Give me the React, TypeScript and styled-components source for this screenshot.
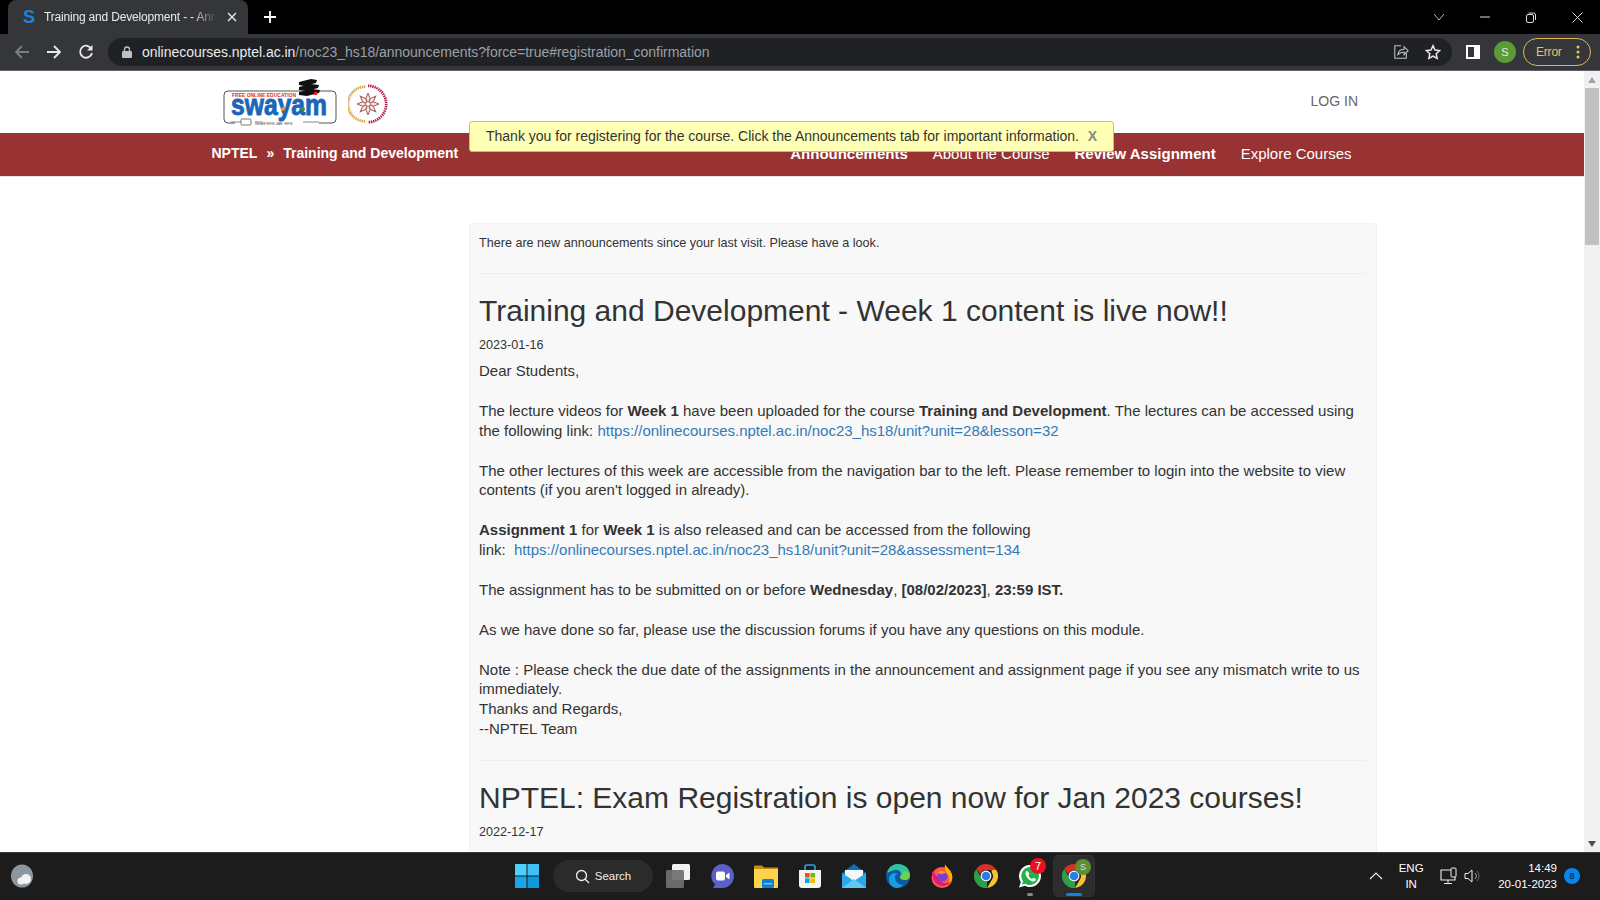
import React from "react";
import styled, { createGlobalStyle } from "styled-components";

const Global = createGlobalStyle`
  html, body { margin: 0; padding: 0; height: 900px; overflow: hidden; background: #fff; }
  * { box-sizing: border-box; }
  body { font-family: "Liberation Sans", Arial, sans-serif; }
`;
const Screen = styled.div`display:flex;flex-direction:column;width:1600px;height:900px;overflow:hidden;`;

/* ---- browser chrome ---- */
const TabStrip = styled.div`height:34px;background:#000;display:flex;align-items:flex-end;padding-left:8px;flex:none;`;
const Tab = styled.div`width:240px;height:34px;background:#35363a;border-radius:8px 8px 0 0;display:flex;align-items:center;padding:0 11px 0 14px;color:#e8eaed;font:12px "Liberation Sans",sans-serif;`;
const TabTitle = styled.span`flex:1;margin:0 10px 0 8px;white-space:nowrap;overflow:hidden;letter-spacing:-.18px;
  -webkit-mask-image:linear-gradient(90deg,#000 86%,transparent);mask-image:linear-gradient(90deg,#000 86%,transparent);`;
const NewTab = styled.div`margin-left:15px;height:34px;display:flex;align-items:center;`;
const WindowControls = styled.div`margin-left:auto;height:34px;display:flex;align-items:center;`;
const WinBtn = styled.div`width:46px;height:28px;display:flex;align-items:center;justify-content:center;`;

const Toolbar = styled.div`height:37px;background:#35363a;border-bottom:1px solid #5f6368;display:flex;align-items:center;padding-bottom:1px;flex:none;`;
const NavIcon = styled.div`width:32px;height:28px;display:flex;align-items:center;justify-content:center;`;
const NavIcons = styled.div`display:flex;padding-left:6px;`;
const Omnibox = styled.div`margin-left:6px;width:1344px;height:28px;border-radius:14px;background:#202124;display:flex;align-items:center;padding:0 12px 0 14px;`;
const UrlHost = styled.span`color:#e8eaed;font-size:14px;margin-left:10px;letter-spacing:-.03px;`;
const UrlRest = styled.span`color:#9aa0a6;font-size:14px;letter-spacing:-.03px;`;
const OmniEnd = styled.div`margin-left:auto;margin-right:-1px;display:flex;gap:16px;align-items:center;`;
const SidePanel = styled(NavIcon)`margin-left:5px;`;
const Avatar = styled.div`width:22px;height:22px;border-radius:50%;background:#5c9a35;color:#e8eaed;font-size:11px;display:flex;align-items:center;justify-content:center;margin-left:5px;`;
const ErrorPill = styled.div`margin-left:7px;width:68px;height:28px;border:1px solid #e2b45a;border-radius:14px;display:flex;align-items:center;justify-content:space-between;padding:0 10px 0 12px;color:#f0c060;font-size:12px;letter-spacing:-.2px;`;

/* ---- page ---- */
const Viewport = styled.div`flex:1;min-height:0;display:flex;position:relative;`;
const PageScroll = styled.div`flex:1;min-width:0;overflow:hidden;background:#fff;`;
const SiteHeader = styled.div`height:62px;display:flex;align-items:center;padding-left:223px;padding-right:226px;`;
const EmblemSlot = styled.div`margin:4px 0 0 11px;display:flex;`;
const LogIn = styled.a`margin-left:auto;color:#666;font-size:14px;margin-top:-2px;`;
const SiteNav = styled.div`height:44px;background:#993333;border-bottom:1px solid #e4e4e4;display:flex;align-items:center;color:#fff;padding:0 0 2px 211.500px;`;
const Crumb = styled.span`font-size:14px;font-weight:bold;margin-top:-1px;`;
const CrumbSep = styled(Crumb)`margin:-1px 9px 0;`;
const NavLinks = styled.div`display:flex;gap:25px;margin-left:332px;`;
const NavLink = styled.a<{ $bold?: boolean }>`font-size:15px;font-weight:${p => (p.$bold ? "bold" : "normal")};`;
const Alert = styled.div`position:absolute;left:469px;top:50px;width:645px;height:31px;background:#ffffb5;border:1px solid #c8c850;border-radius:3px;display:flex;align-items:center;padding:0 16px 2px;color:#333;font-size:14px;`;
const AlertClose = styled.span`margin-left:auto;font-weight:bold;color:#888;font-size:14px;`;

const Content = styled.div`margin:46px 0 0 469px;width:908px;background:#f8f8f8;border:1px solid #f1f1f1;border-radius:4px;padding:9px 10px 9px 9px;`;
const Notice = styled.div`font-size:12.6px;line-height:20px;color:#333;height:40px;`;
const Rule = styled.hr`border:0;border-top:1px solid #eee;margin:0;`;
const Title = styled.h2`margin:20px 0 10px;font-size:30px;font-weight:500;line-height:33px;color:#333;`;
const DateLine = styled.div`font-size:12.6px;line-height:17px;color:#333;margin-bottom:7px;`;
const Body = styled.div`font-size:15px;line-height:19.9px;color:#333;`;
const Para = styled.p`margin:0 0 19.9px;`;
const Link = styled.a`color:#337ab7;`;
const Second = styled.div`margin-top:21px;`;

const Scrollbar = styled.div`width:16px;background:#f1f1f1;display:flex;flex-direction:column;align-items:center;flex:none;`;
const ScrollArrow = styled.div`height:17px;display:flex;align-items:center;justify-content:center;flex:none;`;
const ScrollThumb = styled.div`width:14px;height:157px;background:#c1c1c1;`;
const ScrollGap = styled.div`flex:1;`;

/* ---- taskbar ---- */
const Taskbar = styled.div`height:48px;background:#1c1c1c;border-top:1px solid #3a3a3a;display:flex;align-items:center;flex:none;color:#fff;padding-bottom:1px;`;
const LeftSlot = styled.div`width:505px;padding-left:11px;display:flex;align-items:center;`;
const TaskIcon = styled.div<{ $active?: boolean }>`width:44px;height:40px;display:flex;align-items:center;justify-content:center;position:relative;border-radius:4px;
  ${p => p.$active ? "background:#2d2d2d;outline:1px solid #333;width:40px;margin:0 2px;" : ""}`;
const SearchPill = styled.div`width:100px;height:32px;border-radius:16px;background:#2b2b2b;margin:0 3px 0 4px;display:flex;align-items:center;justify-content:center;gap:5px;font-size:11.5px;color:#eee;`;
const Badge = styled.div`position:absolute;right:6px;top:2px;width:16px;height:16px;border-radius:50%;background:#e81123;color:#fff;font-size:11px;display:flex;align-items:center;justify-content:center;`;
const SBadge = styled.div`position:absolute;right:3px;top:3px;width:16px;height:16px;border-radius:50%;background:#5f8f35;color:#ddd;font-size:9px;display:flex;align-items:center;justify-content:center;`;
const RunDot = styled.div<{ $w: number; $c: string }>`position:absolute;bottom:0;left:50%;transform:translateX(-50%);width:${p => p.$w}px;height:3px;border-radius:2px;background:${p => p.$c};`;
const Tray = styled.div`margin-left:auto;display:flex;align-items:center;padding-right:20px;`;
const Lang = styled.div`font-size:11.5px;line-height:16px;text-align:center;width:32px;margin-left:12px;`;
const ClockBox = styled.div`font-size:11.5px;line-height:16px;text-align:right;margin-left:16px;`;
const TrayIcons = styled.div`display:flex;align-items:center;gap:6px;margin-left:13px;`;
const Notif = styled.div`width:16px;height:16px;border-radius:50%;background:#0a84ea;color:#111;font-size:9px;display:flex;align-items:center;justify-content:center;margin-left:7px;`;

const Favicon = () => (
  <svg width="14" height="18" viewBox="0 0 14 18"><text x="7" y="15" textAnchor="middle" fontFamily="Liberation Sans" fontWeight="bold" fontSize="18" fill="#1b84d8">S</text></svg>
);
const SwayamLogo = () => (
  <svg width="114" height="47" viewBox="0 0 114 47">
    <rect x="1" y="12" width="112" height="32" rx="4" fill="#fff" stroke="#555" strokeWidth="1" />
    <rect x="12" y="40" width="84" height="6" fill="#fff" />
    <text x="9" y="17.500" fontFamily="Liberation Sans" fontWeight="bold" fontSize="5" textLength="64" lengthAdjust="spacing" fill="#e0312a">FREE ONLINE EDUCATION</text>
    <text x="8" y="36" fontFamily="Liberation Sans" fontWeight="bold" fontSize="29" fill="#1a66b8" stroke="#1a66b8" strokeWidth=".9" textLength="96" lengthAdjust="spacingAndGlyphs">swayam</text>
    <circle cx="60" cy="30" r="2" fill="#f39c12" /><circle cx="80" cy="30" r="2" fill="#2ca02c" />
    <rect x="18" y="40" width="10" height="6" rx="1" fill="#fff" stroke="#444" strokeWidth=".7" />
    <line x1="8" y1="43" x2="18" y2="43" stroke="#555" strokeWidth=".7" />
    <text x="32" y="45.500" fontFamily="Liberation Sans" fontSize="4.2" fill="#333">शिक्षित भारत, उन्नत भारत</text>
    <line x1="80" y1="43" x2="96" y2="43" stroke="#555" strokeWidth=".7" />
    <path d="M76 3l12-3 6 1-1 3-12 3-5-1zM76 8l12-3 8 1-1 3-12 3-7-1zM76 13l13-3 8 1-1 3-12 3-8-1z" fill="#111" />
    <rect x="91" y="13" width="3" height="3" fill="#d22" />
  </svg>
);
const Emblem = () => (
  <svg width="40" height="40" viewBox="0 0 42 44">
    <path d="M18 3A19 19 0 0 0 18 41" fill="none" stroke="#d9a441" strokeWidth="3" strokeDasharray="1.6 .8" />
    <path d="M21 2A20 20 0 0 1 21 42" fill="none" stroke="#b5234a" strokeWidth="3" strokeDasharray="1.6 .8" />
    <g stroke="#a55a55" strokeWidth="1.100" fill="#f7e6e6">
      {[0, 45, 90, 135, 180, 225, 270, 315].map(a => (
        <path key={a} transform={`rotate(${a} 21 22)`} d="M21 22l-2.4-6 2.4-6 2.4 6z" />
      ))}
    </g>
    <circle cx="21" cy="22" r="2.6" fill="#fff" stroke="#a55a55" />
  </svg>
);

const WinLogo = () => (
  <svg width="24" height="24" viewBox="0 0 24 24">
    <rect x="0" y="0" width="11.5" height="11.5" fill="#4fd0f8" /><rect x="12.5" y="0" width="11.5" height="11.5" fill="#3fc0f5" />
    <rect x="0" y="12.5" width="11.5" height="11.5" fill="#17a6ea" /><rect x="12.5" y="12.5" width="11.5" height="11.5" fill="#0f97e0" />
  </svg>
);
const TaskView = () => (
  <svg width="24" height="24" viewBox="0 0 24 24">
    <rect x="6" y="0" width="18" height="16" rx="1.5" fill="#f2f2f2" />
    <rect x="0" y="6" width="18" height="18" rx="1.5" fill="#707070" fillOpacity=".93" />
  </svg>
);
const Meet = () => (
  <svg width="24" height="24" viewBox="0 0 24 24">
    <path d="M12 0a12 12 0 0 1 0 24H3l2-3.5A12 12 0 0 1 12 0z" fill="#5b5fc7" />
    <rect x="6" y="7.5" width="9" height="9" rx="2" fill="#fff" /><path d="M16 11l3.5-2.5v7L16 13z" fill="#fff" />
  </svg>
);
const Folder = () => (
  <svg width="24" height="24" viewBox="0 0 24 24">
    <path d="M0 2.5a1 1 0 0 1 1-1h7l2 2h14v3H0z" fill="#c98d0a" />
    <path d="M0 5h24v18a1 1 0 0 1-1 1H1a1 1 0 0 1-1-1z" fill="#fcd34d" />
    <rect x="8" y="15" width="12" height="9" rx="1.5" fill="#0f7fd0" /><rect x="10" y="19" width="8" height="1.4" fill="#7cc4f0" />
  </svg>
);
const Store = () => (
  <svg width="24" height="24" viewBox="0 0 24 24">
    <path d="M7 6V3a2 2 0 0 1 2-2h6a2 2 0 0 1 2 2v3" fill="none" stroke="#2aa4e8" strokeWidth="1.6" />
    <path d="M1 6h22v15a3 3 0 0 1-3 3H4a3 3 0 0 1-3-3z" fill="#f4f4f4" />
    <rect x="7" y="9" width="4.6" height="4.6" fill="#f25022" /><rect x="12.4" y="9" width="4.6" height="4.6" fill="#7fba00" />
    <rect x="7" y="14.4" width="4.6" height="4.6" fill="#00a4ef" /><rect x="12.4" y="14.4" width="4.6" height="4.6" fill="#ffb900" />
  </svg>
);
const Mail = () => (
  <svg width="24" height="24" viewBox="0 0 24 24">
    <path d="M0 9L12 0l12 9v15H0z" fill="#0f6cbd" />
    <path d="M3 6h18v9l-9 5-9-5z" fill="#f4f8fb" />
    <path d="M0 9l12 8 12-8v15H0z" fill="#29a8ea" />
    <path d="M0 24l12-9 12 9z" fill="#62c6f2" />
  </svg>
);
const Edge = () => (
  <svg width="24" height="24" viewBox="0 0 24 24">
    <circle cx="12" cy="12" r="12" fill="#0c59a4" />
    <path d="M1 9C3 2 8 0 12 0c7 0 12 5 12 11 0 3-2 5-5 5-3 0-5-1-5-3 0-1 1-2 1-3 0-3-4-5-7-4-3 1-5 2-7 3z" fill="#2fc4a0" />
    <path d="M24 11c0 3-2 5-5 5-3 0-5-1-5-3 0-2 3-1 3-5 2-2 7 0 7 3z" fill="#6ed24a" />
    <path d="M9 13c0 5 4 8 8 8-2 2-4 3-6 3C6 24 3 20 3 15c0-3 3-6 6-6 2 0 3 1 3 1-2 0-3 1-3 3z" fill="#1b9de2" />
  </svg>
);
const Firefox = () => (
  <svg width="24" height="24" viewBox="0 0 24 24">
    <circle cx="12" cy="13.5" r="10.5" fill="#ff5a3c" />
    <path d="M15 0c1 3 6 6 7 11 1 6-3 12-9 12 6-2 8-8 5-12-1-2-4-4-3-11z" fill="#ffb000" />
    <path d="M2 7c0 7 3 15 11 15 4 0 7-2 8-5-3 3-9 3-11-1C8 12 4 10 2 7z" fill="#e31587" />
    <circle cx="12.5" cy="12.5" r="5" fill="#7a3fd0" /><path d="M8 8c3-2 6-1 8 1-2 0-3 1-5 1-1 0-2-1-3-2z" fill="#ff9a2e" />
  </svg>
);
const Chrome = () => (
  <svg width="24" height="24" viewBox="0 0 24 24">
    <path d="M12 0a12 12 0 0 1 10.4 6H12a6 6 0 0 0-5.6 3.8L2.3 5A12 12 0 0 1 12 0z" fill="#d93025" />
    <path d="M22.4 6A12 12 0 0 1 13 24l4.7-8A6 6 0 0 0 18 9l-.5-3z" fill="#fbc02d" />
    <path d="M2.3 5l5.3 9.3A6 6 0 0 0 13 18l-0 6A12 12 0 0 1 2.3 5z" fill="#2e9e48" />
    <circle cx="12" cy="12" r="5.4" fill="#fff" /><circle cx="12" cy="12" r="4.3" fill="#2a7de1" />
  </svg>
);
const WhatsApp = () => (
  <svg width="24" height="24" viewBox="0 0 24 24">
    <path d="M12 1a11 11 0 0 1 0 22c-2 0-3.600-.5-5-1.300L1 23.500l1.800-5.500A11 11 0 0 1 12 1z" fill="#fff" />
    <path d="M12 3a9 9 0 0 1 0 18c-1.800 0-3.300-.5-4.600-1.300L4 20.500l1-3.300A9 9 0 0 1 12 3z" fill="#25b04a" />
    <path d="M8.500 7c-1.500 1-1.500 3 0 5.500s4.500 5 6.500 5 3-1.500 2.800-2.500l-2.500-1.300-1.300 1.300c-1.500-.5-3-2-3.600-3.700l1-1.200L10 7.500z" fill="#fff" />
  </svg>
);

export default function App() {
  return (
    <Screen>
      <Global />
      <TabStrip>
        <Tab>
          <Favicon />
          <TabTitle>Training and Development - - Announcements</TabTitle>
          <svg width="10" height="10" viewBox="0 0 10 10"><path d="M1 1l8 8M9 1l-8 8" stroke="#e8eaed" strokeWidth="1.4" /></svg>
        </Tab>
        <NewTab>
          <svg width="14" height="14" viewBox="0 0 14 14"><path d="M7 1v12M1 7h12" stroke="#fff" strokeWidth="1.8" /></svg>
        </NewTab>
        <WindowControls>
          <WinBtn><svg width="12" height="8" viewBox="0 0 12 8"><path d="M1 1l5 6 5-6" fill="none" stroke="#b8b8b8" /></svg></WinBtn>
          <WinBtn><svg width="10" height="10" viewBox="0 0 10 10"><path d="M0 5h10" stroke="#ddd" /></svg></WinBtn>
          <WinBtn><svg width="10" height="11" viewBox="0 0 10 11"><rect x=".5" y="2.500" width="7" height="8" rx="1.500" fill="none" stroke="#ddd" /><path d="M2.500 1h5a2 2 0 0 1 2 2v5" fill="none" stroke="#ddd" /></svg></WinBtn>
          <WinBtn><svg width="11" height="11" viewBox="0 0 11 11"><path d="M.5.5l10 10M10.500.5l-10 10" stroke="#ddd" /></svg></WinBtn>
        </WindowControls>
      </TabStrip>
      <Toolbar>
        <NavIcons>
          <NavIcon><svg width="16" height="16" viewBox="0 0 16 16"><path d="M15 8H2M8 2L2 8l6 6" fill="none" stroke="#7b7d80" strokeWidth="1.800" /></svg></NavIcon>
          <NavIcon><svg width="16" height="16" viewBox="0 0 16 16"><path d="M1 8h13M8 2l6 6-6 6" fill="none" stroke="#e8eaed" strokeWidth="1.800" /></svg></NavIcon>
          <NavIcon><svg width="16" height="16" viewBox="0 0 16 16"><path d="M13.500 5A6 6 0 1 0 14 9" fill="none" stroke="#e8eaed" strokeWidth="1.800" /><path d="M14.500 1v5.500H9z" fill="#e8eaed" /></svg></NavIcon>
        </NavIcons>
        <Omnibox>
          <svg width="10" height="12" viewBox="0 0 10 12"><rect x="0" y="5" width="10" height="7" rx="1.200" fill="#bdc1c6" /><path d="M2.500 5V3.500a2.500 2.500 0 0 1 5 0V5" fill="none" stroke="#bdc1c6" strokeWidth="1.300" /></svg>
          <UrlHost>onlinecourses.nptel.ac.in</UrlHost>
          <UrlRest>/noc23_hs18/announcements?force=true#registration_confirmation</UrlRest>
          <OmniEnd>
            <svg width="16" height="16" viewBox="0 0 18 18"><path d="M9 2H2v14h13V10" fill="none" stroke="#bdc1c6" strokeWidth="1.200" /><path d="M5.500 12c.5-4 3-6 7-6V3l4.500 4.500-4.500 4.500V9c-3 0-5 1-7 3z" fill="none" stroke="#bdc1c6" strokeWidth="1.200" /></svg>
            <svg width="16" height="16" viewBox="0 0 24 24"><path d="M12 2.500l3 6.500 7 .8-5.200 4.800 1.400 7L12 18l-6.200 3.600 1.400-7L2 9.800 9 9z" fill="none" stroke="#e8eaed" strokeWidth="2.200" /></svg>
          </OmniEnd>
        </Omnibox>
        <SidePanel><svg width="14" height="14" viewBox="0 0 14 14"><rect x="0" y="0" width="14" height="14" fill="#fff" /><rect x="2" y="2" width="6" height="10" fill="#35363a" /></svg></SidePanel>
        <Avatar>S</Avatar>
        <ErrorPill>Error
          <svg width="4" height="14" viewBox="0 0 4 14"><circle cx="2" cy="2" r="1.500" fill="#f0c060" /><circle cx="2" cy="7" r="1.500" fill="#f0c060" /><circle cx="2" cy="12" r="1.500" fill="#f0c060" /></svg>
        </ErrorPill>
      </Toolbar>
      <Viewport>
        <PageScroll>
          <SiteHeader>
            <SwayamLogo />
            <EmblemSlot><Emblem /></EmblemSlot>
            <LogIn>LOG IN</LogIn>
          </SiteHeader>
          <SiteNav>
            <Crumb>NPTEL</Crumb>
            <CrumbSep>»</CrumbSep>
            <Crumb>Training and Development</Crumb>
            <NavLinks>
              <NavLink $bold>Announcements</NavLink>
              <NavLink>About the Course</NavLink>
              <NavLink $bold>Review Assignment</NavLink>
              <NavLink>Explore Courses</NavLink>
            </NavLinks>
          </SiteNav>
          <Content>
            <Notice>There are new announcements since your last visit. Please have a look.</Notice>
            <Rule />
            <Title>Training and Development - Week 1 content is live now!!</Title>
            <DateLine>2023-01-16</DateLine>
            <Body>
              <Para>Dear Students,</Para>
              <Para>The lecture videos for <b>Week 1</b> have been uploaded for the course <b>Training and Development</b>. The lectures can be accessed using the following link: <Link>https://onlinecourses.nptel.ac.in/noc23_hs18/unit?unit=28&amp;lesson=32</Link></Para>
              <Para>The other lectures of this week are accessible from the navigation bar to the left. Please remember to login into the website to view contents (if you aren't logged in already).</Para>
              <Para><b>Assignment 1</b> for <b>Week 1</b> is also released and can be accessed from the following<br />link:&nbsp; <Link>https://onlinecourses.nptel.ac.in/noc23_hs18/unit?unit=28&amp;assessment=134</Link></Para>
              <Para>The assignment has to be submitted on or before <b>Wednesday</b>, <b>[08/02/2023]</b>, <b>23:59 IST.</b></Para>
              <Para>As we have done so far, please use the discussion forums if you have any questions on this module.</Para>
              <Para>Note : Please check the due date of the assignments in the announcement and assignment page if you see any mismatch write to us immediately.<br />Thanks and Regards,<br />--NPTEL Team</Para>
            </Body>
            <Second>
              <Rule />
              <Title>NPTEL: Exam Registration is open now for Jan 2023 courses!</Title>
              <DateLine>2022-12-17</DateLine>
            </Second>
          </Content>
        </PageScroll>
        <Scrollbar>
          <ScrollArrow><svg width="8" height="6" viewBox="0 0 8 6"><path d="M4 0l4 6H0z" fill="#a3a3a3" /></svg></ScrollArrow>
          <ScrollThumb />
          <ScrollGap />
          <ScrollArrow><svg width="8" height="6" viewBox="0 0 8 6"><path d="M0 0h8L4 6z" fill="#505050" /></svg></ScrollArrow>
        </Scrollbar>
        <Alert>
          Thank you for registering for the course. Click the Announcements tab for important information.
          <AlertClose>X</AlertClose>
        </Alert>
      </Viewport>
      <Taskbar>
        <LeftSlot>
          <svg width="24" height="24" viewBox="0 0 24 24"><ellipse cx="11" cy="12" rx="11" ry="11.500" fill="#8f979e" /><circle cx="15" cy="15" r="5" fill="#f2f2f2" /><circle cx="10" cy="17" r="3.500" fill="#f2f2f2" /></svg>
        </LeftSlot>
        <TaskIcon><WinLogo /></TaskIcon>
        <SearchPill>
          <svg width="15" height="15" viewBox="0 0 15 15"><circle cx="6.500" cy="6.500" r="5" fill="none" stroke="#eee" strokeWidth="1.300" /><path d="M10 10l4 4" stroke="#eee" strokeWidth="1.300" /></svg>
          Search
        </SearchPill>
        <TaskIcon><TaskView /></TaskIcon>
        <TaskIcon><Meet /></TaskIcon>
        <TaskIcon><Folder /></TaskIcon>
        <TaskIcon><Store /></TaskIcon>
        <TaskIcon><Mail /></TaskIcon>
        <TaskIcon><Edge /></TaskIcon>
        <TaskIcon><Firefox /></TaskIcon>
        <TaskIcon><Chrome /></TaskIcon>
        <TaskIcon><WhatsApp /><Badge>7</Badge><RunDot $w={6} $c="#8a8a8a" /></TaskIcon>
        <TaskIcon $active><Chrome /><SBadge>S</SBadge><RunDot $w={16} $c="#0a84ea" /></TaskIcon>
        <Tray>
          <svg width="14" height="8" viewBox="0 0 14 8"><path d="M1 7l6-6 6 6" fill="none" stroke="#eee" strokeWidth="1.200" /></svg>
          <Lang>ENG<br />IN</Lang>
          <TrayIcons>
            <svg width="18" height="18" viewBox="0 0 18 18"><path d="M11 3H1v10h14v-3" fill="none" stroke="#eee" strokeWidth="1.100" /><rect x="11" y="1" width="5" height="9" rx="1" fill="#1c1c1c" stroke="#eee" /><path d="M8 13v3M4 16.500h8" stroke="#eee" /></svg>
            <svg width="18" height="16" viewBox="0 0 18 16"><path d="M1 5.500h3L8 2v12L4 10.500H1z" fill="none" stroke="#eee" /><path d="M11 5a4 4 0 0 1 0 6" fill="none" stroke="#aaa" /><path d="M13 3a7 7 0 0 1 0 10" fill="none" stroke="#666" /></svg>
          </TrayIcons>
          <ClockBox>14:49<br />20-01-2023</ClockBox>
          <Notif>8</Notif>
        </Tray>
      </Taskbar>
    </Screen>
  );
}
